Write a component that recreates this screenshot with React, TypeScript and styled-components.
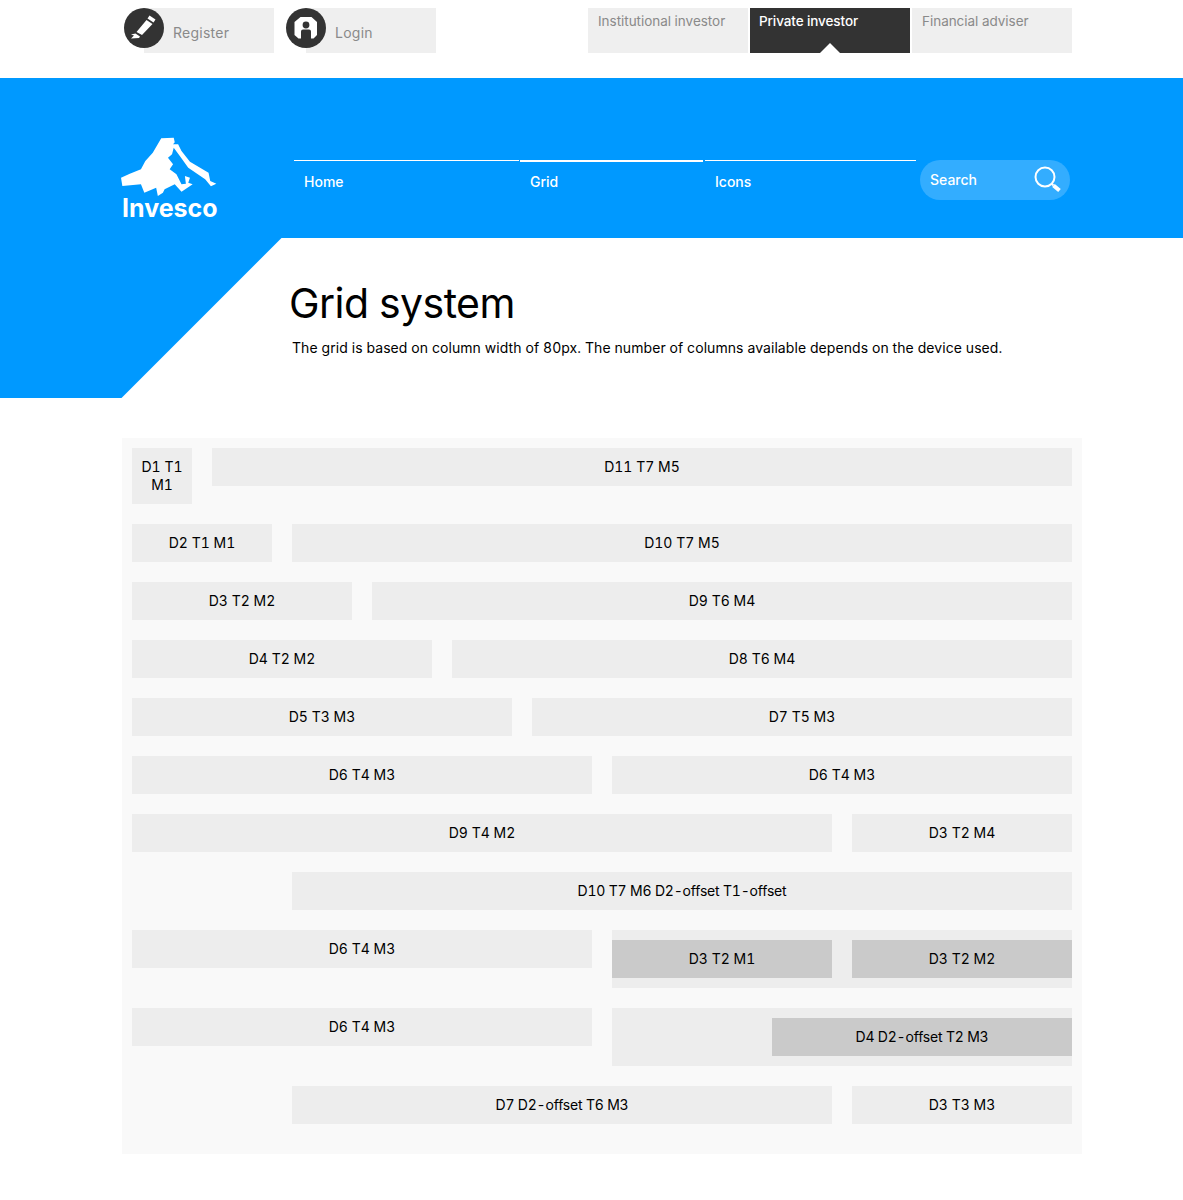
import React from "react";
import styled, { createGlobalStyle } from "styled-components";

const font = `"Inter", "Noto Sans", "Liberation Sans", sans-serif`;

const Global = createGlobalStyle`
  html, body { margin: 0; padding: 0; background: #fff; }
  body { font-family: ${font}; color: #000; font-variant-numeric: tabular-nums; }
`;

const Top = styled.div`
  width: 960px; height: 78px; margin: 0 auto 0 122px; padding-top: 8px;
  box-sizing: border-box; display: flex; justify-content: space-between;
`;
const UserLinks = styled.div`display: flex; gap: 12px; margin-left: 2px;`;
const UserLink = styled.a`
  width: 150px; height: 45px; display: flex; align-items: center; position: relative;
  background: linear-gradient(to right, transparent 20px, #efefef 20px);
  color: #8a8a8a; font-size: 14px; letter-spacing: 0.25px; padding: 3px 0 0 49px; box-sizing: border-box;
`;
const IconDisc = styled.svg`position: absolute; left: 0; top: 0; width: 40px; height: 40px;`;
const Tabs = styled.div`display: flex; gap: 2px; margin-right: 10px;`;
const Tab = styled.a<{ $active?: boolean }>`
  width: 160px; height: 45px; box-sizing: border-box; padding: 5px 10px; position: relative;
  font-size: 13.5px; line-height: 17px; letter-spacing: -0.03px;
  background: ${p => (p.$active ? "#333" : "#efefef")};
  color: ${p => (p.$active ? "#fff" : "#8a8a8a")};
  font-weight: ${p => (p.$active ? 500 : 400)};
  ${p => p.$active ? `padding-left: 9px; letter-spacing: -0.1px; &::after { content: ""; position: absolute; left: 70px; bottom: 0; width: 0; height: 0;
    border-left: 10px solid transparent; border-right: 10px solid transparent; border-bottom: 10px solid #fff; }` : ""}
`;

const Header = styled.header`
  height: 160px; background: #0099ff; padding: 60px 0 0 122px; box-sizing: border-box;
  display: flex; align-items: flex-start; position: relative;
`;
const Logo = styled.div`width: 172px; height: 82px; display: flex; flex-direction: column;`;
const LogoMark = styled.svg`width: 96px; height: 62px; margin: -1px 0 0 -1px; flex: none;`;
const LogoText = styled.span`
  color: #fff; font-weight: 700; font-size: 25px; line-height: 24px; width: 97px; margin-top: -3px; white-space: nowrap;
`;
const Nav = styled.nav`display: flex; margin-top: 22px; gap: 1px;`;
const NavItem = styled.a<{ $w: number; $active?: boolean; $shift?: number }>`
  width: ${p => p.$w}px; height: 40px; box-sizing: border-box;
  margin-left: ${p => p.$shift ?? 0}px;
  border-top: ${p => (p.$active ? 2 : 1)}px solid #fff; color: #fff; font-size: 14px; font-weight: 500;
  padding: ${p => (p.$active ? 11 : 12)}px 10px 0;
  line-height: 17px;
`;
const Search = styled.div`
  width: 150px; height: 40px; margin: 22px 0 0 4px; border-radius: 20px; background: #33adff;
  display: flex; align-items: center; justify-content: space-between; padding: 0 9px 0 10px; box-sizing: border-box;
  color: #fff; font-size: 14px; font-weight: 500;
`;
const SearchLabel = styled.span`margin-top: -2px;`;

const Hero = styled.section`display: flex; height: 160px;`;
const Wedge = styled.div`
  flex: 0 0 282px; height: 160px; background: #0099ff;
  clip-path: polygon(0 0, 281.5px 0, 121.5px 100%, 0 100%);
`;
const HeroText = styled.div`margin-left: 8px; padding-top: 39px;`;
const Title = styled.h1`margin: 0 0 0 -1px; font-size: 41px; line-height: 52px; font-weight: 400; letter-spacing: -0.55px;`;
const Lead = styled.p`margin: 9px 0 0 2px; font-size: 14px; line-height: 20px; letter-spacing: 0.07px; white-space: nowrap;`;

const Grid = styled.main`
  width: 960px; margin: 40px 0 46px 122px; padding: 10px 10px 30px; box-sizing: border-box;
  background: #f9f9f9; display: grid; grid-template-columns: repeat(12, 60px); gap: 20px; align-items: start;
`;
const Cell = styled.div<{ $span: number; $start?: number; $strong?: boolean; $tight?: boolean }>`
  grid-column: ${p => (p.$start ? `${p.$start} / span ${p.$span}` : `span ${p.$span}`)};
  min-height: 38px; padding: 10px 8px; box-sizing: border-box; text-align: center;
  font-size: 14px; line-height: 18px;
  letter-spacing: ${p => (p.$tight ? "-0.2px" : "0")};
  background: ${p => (p.$strong ? "#cacaca" : "#ededed")};
`;
const Nested = styled.div`
  grid-column: span 6; background: #ededed; padding: 10px 0; display: grid;
  grid-template-columns: repeat(6, 60px); column-gap: 20px;
`;

const rows: [string, number, number?][] = [
  ["D1 T1 M1", 1], ["D11 T7 M5", 11],
  ["D2 T1 M1", 2], ["D10 T7 M5", 10],
  ["D3 T2 M2", 3], ["D9 T6 M4", 9],
  ["D4 T2 M2", 4], ["D8 T6 M4", 8],
  ["D5 T3 M3", 5], ["D7 T5 M3", 7],
  ["D6 T4 M3", 6], ["D6 T4 M3", 6],
  ["D9 T4 M2", 9], ["D3 T2 M4", 3],
  ["D10 T7 M6 D2-offset T1-offset", 10, 3],
];

export default function App() {
  return (
    <>
      <Global />
      <Top>
        <UserLinks>
          <UserLink>
            <IconDisc viewBox="0 0 40 40">
              <circle cx="20" cy="20" r="20" fill="#333" />
              <path d="M25.5 7.5 L31.5 11.5 L29.5 14.5 L23.5 10.5 Z M22.5 12 L28.5 16 L18 27 L12.5 24 Z M11.5 25.5 L16 28.5 L15 30 L7 30.5 L10 27.5 L7 26.5 Z" fill="#fff" />
            </IconDisc>
            Register
          </UserLink>
          <UserLink>
            <IconDisc viewBox="0 0 40 40">
              <circle cx="20" cy="20" r="20" fill="#333" />
              <path fillRule="evenodd" d="M14.5 9 H25.5 L31 14 V27 L27.5 30.5 H25 V23.5 Q25 21.5 23 21.5 H17 Q15 21.5 15 23.5 V30.5 H12.5 L8.5 27 V14 Z M20 13.6 A3.4 3.4 0 1 0 20 20.4 A3.4 3.4 0 1 0 20 13.6 Z" fill="#fff" />
            </IconDisc>
            Login
          </UserLink>
        </UserLinks>
        <Tabs>
          <Tab>Institutional investor</Tab>
          <Tab $active>Private investor</Tab>
          <Tab>Financial adviser</Tab>
        </Tabs>
      </Top>
      <Header>
        <Logo>
          <LogoMark viewBox="36 38 284 186" preserveAspectRatio="none">
            <path fill="#fff" d="M36 160 L62 148 L95 135 L108 110 L130 85 L155 42 L192 40 L195 54 L190 60 L205 60 L215 80 L240 112 L295 145 L300 170 L318 178 L302 186 L285 165 L235 130 L210 95 L192 70 L187 90 L175 100 L190 120 L180 135 L200 150 L215 180 L228 178 L225 155 L240 160 L235 175 L248 180 L215 202 L195 180 L165 195 L160 205 L145 215 L140 190 L105 205 L95 180 L40 185 Z" />
          </LogoMark>
          <LogoText>Invesco</LogoText>
        </Logo>
        <Nav>
          <NavItem $w={225}>Home</NavItem>
          <NavItem $w={183} $active>Grid</NavItem>
          <NavItem $w={211} $shift={1}>Icons</NavItem>
        </Nav>
        <Search>
          <SearchLabel>Search</SearchLabel>
          <svg width="28" height="28" viewBox="0 0 28 28" fill="none">
            <circle cx="12" cy="11" r="9.5" stroke="#fff" strokeWidth="2" />
            <path d="M18.5 17.5 L20.5 19.5" stroke="#fff" strokeWidth="2" />
            <path d="M20.5 19.5 L26.5 24.5" stroke="#fff" strokeWidth="4" />
          </svg>
        </Search>
      </Header>
      <Hero>
        <Wedge />
        <HeroText>
          <Title>Grid system</Title>
          <Lead>The grid is based on column width of 80px. The number of columns available depends on the device used.</Lead>
        </HeroText>
      </Hero>
      <Grid>
        {rows.map(([t, s, st], i) => (
          <Cell key={i} $span={s} $start={st} $tight={t.includes("-")}>{t}</Cell>
        ))}
        <Cell $span={6}>D6 T4 M3</Cell>
        <Nested>
          <Cell $span={3} $strong>D3 T2 M1</Cell>
          <Cell $span={3} $strong>D3 T2 M2</Cell>
        </Nested>
        <Cell $span={6}>D6 T4 M3</Cell>
        <Nested>
          <Cell $span={4} $start={3} $strong $tight>D4 D2-offset T2 M3</Cell>
        </Nested>
        <Cell $span={7} $start={3} $tight>D7 D2-offset T6 M3</Cell>
        <Cell $span={3}>D3 T3 M3</Cell>
      </Grid>
    </>
  );
}
